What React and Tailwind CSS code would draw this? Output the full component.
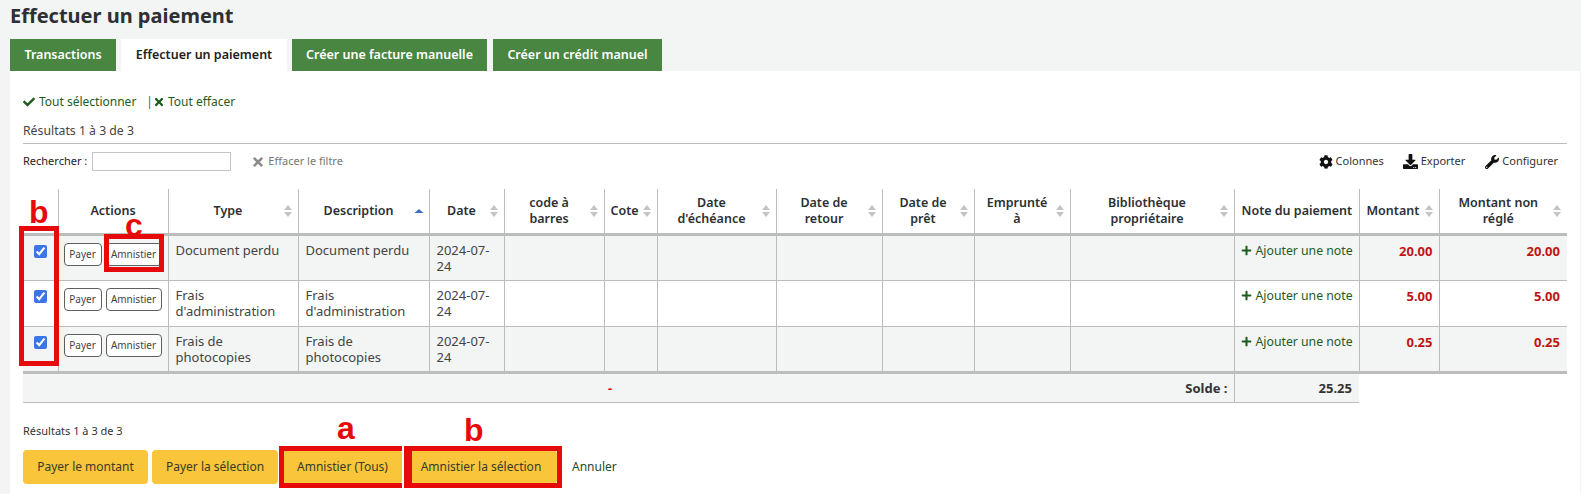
import { FaCheck, FaTimes, FaPlus, FaCog, FaDownload, FaWrench } from "react-icons/fa";

const columns = [
  { label: "", width: 35 },
  { label: "Actions", width: 110 },
  { label: "Type", width: 130, sort: true },
  { label: "Description", width: 131, sort: "asc" },
  { label: "Date", width: 75, sort: true },
  { label: "code à barres", width: 100, sort: true },
  { label: "Cote", width: 53, sort: true, pad: "pl-[6px] pr-[4px]" },
  { label: "Date d'échéance", width: 119, sort: true },
  { label: "Date de retour", width: 106, sort: true },
  { label: "Date de prêt", width: 92, sort: true },
  { label: "Emprunté à", width: 96, sort: true },
  { label: "Bibliothèque propriétaire", width: 164, sort: true },
  { label: "Note du paiement", width: 125, pad: "pl-[7px] pr-[3px]" },
  { label: "Montant", width: 80, sort: true, pad: "pl-[7px] pr-[3px]" },
  { label: "Montant non réglé", width: 128, sort: true },
];

const rows = [
  { type: "Document perdu", amount: "20.00", bg: "bg-[#f3f4f4]" },
  { type: "Frais d'administration", amount: "5.00", bg: "bg-white" },
  { type: "Frais de photocopies", amount: "0.25", bg: "bg-[#f3f4f4]" },
];

function SortIcon({ sort }) {
  return (
    <svg viewBox="0 0 10 14" className="absolute right-[5px] top-1/2 h-[14px] w-[10px] -translate-y-1/2">
      {sort === "asc" ? (
        <path d="M5 5 9.500 9H.5z" fill="#3a6fc4" />
      ) : (
        <>
          <path d="M5 1 9 6H1z" fill="#c4c4c4" />
          <path d="M5 13 1 8h8z" fill="#c4c4c4" />
        </>
      )}
    </svg>
  );
}

function RedBox({ className }) {
  return <div className={`absolute border-[5px] border-[#e60a0a] ${className}`} />;
}

function RedLetter({ className, children }) {
  return (
    <span className={`absolute font-['Liberation_Sans',sans-serif] font-bold leading-none text-[#e60a0a] ${className}`}>
      {children}
    </span>
  );
}

function SmallButton({ className, children }) {
  return (
    <button className={`flex h-[23px] items-center justify-center rounded-[4px] border border-[#5f5f5f] bg-white text-[10px] text-[#444] ${className}`}>
      {children}
    </button>
  );
}

function YellowButton({ className, children }) {
  return (
    <button className={`flex h-[34px] items-center justify-center rounded-[4px] bg-[#f9c53a] text-[12px] text-[#3a3a2a] ${className}`}>
      {children}
    </button>
  );
}

function Tab({ active, className, children }) {
  return (
    <div
      className={`flex h-[32px] items-center justify-center text-[12.5px] font-semibold ${
        active ? "bg-white text-[#222]" : "bg-[#488642] text-white"
      } ${className}`}
    >
      {children}
    </div>
  );
}

export default function App() {
  return (
    <div className="relative h-[494px] overflow-hidden bg-[#f3f4f4] font-['Noto_Sans',sans-serif] text-[#333]">
      <h1 className="h-[39px] pl-[10px] pt-[2px] text-[20px] font-bold leading-[28px] text-[#2c3033]">Effectuer un paiement</h1>

      <div className="flex pl-[10px]">
        <Tab className="w-[106px]">Transactions</Tab>
        <Tab active className="ml-[5px] w-[166px]">Effectuer un paiement</Tab>
        <Tab className="ml-[5px] w-[195px]">Créer une facture manuelle</Tab>
        <Tab className="ml-[6px] w-[169px]">Créer un crédit manuel</Tab>
      </div>

      <div className="ml-[10px] mr-px h-[423px] bg-white pl-[13px] pr-[13px]">
        <div className="flex h-[54px] items-center pt-[7px] text-[12px] text-[#1d5c1d]">
          <FaCheck className="mr-[4px] text-[12px] text-[#1d5c1d]" />
          <span>Tout sélectionner</span>
          <span className="ml-[10px] text-[#555]">|</span>
          <FaTimes className="mr-[3px] text-[12px]" />
          <span>Tout effacer</span>
        </div>
        <div className="flex h-[18px] items-start text-[12.25px] leading-[12px] text-[#444]">Résultats 1 à 3 de 3</div>

        <div className="h-[46px] border-t border-[#bcbcbc] pt-[8px]">
          <div className="flex h-[19px] items-center text-[11px] text-[#222]">
            <span>Rechercher :</span>
            <input className="ml-[5px] h-[19px] w-[139px] border border-[#c4c4c4] bg-white" />
            <FaTimes className="ml-[20px] text-[14px] text-[#8a8a8a]" />
            <span className="ml-[3px] text-[#777]">Effacer le filtre</span>
            <div className="ml-auto flex items-center text-[11px] text-[#333]">
              <FaCog className="mr-[3px] text-[14px] text-[#111]" />
              <span>Colonnes</span>
              <FaDownload className="ml-[19px] mr-[3px] text-[15px] text-[#111]" />
              <span>Exporter</span>
              <FaWrench className="ml-[20px] mr-[3px] text-[14px] text-[#111]" />
              <span className="mr-[9px]">Configurer</span>
            </div>
          </div>
        </div>

        <table className="w-[1544px] table-fixed border-collapse text-[13px] leading-[16px]">
          <colgroup>
            {columns.map((col, i) => (
              <col key={i} style={{ width: col.width }} />
            ))}
          </colgroup>
          <thead>
            <tr className="h-[45px] border-b-[3px] border-[#bcbcbc]">
              {columns.map((col, i) => (
                <th
                  key={i}
                  className={`relative border-r border-[#bcbcbc] text-[12.5px] font-semibold leading-[16px] text-[#2c3033] ${
                    i === columns.length - 1 ? "border-r-0" : ""
                  } ${col.pad ? `whitespace-nowrap text-left ${col.pad}` : "text-center"} ${
                    !col.pad && col.sort ? "pl-[9px] pr-[19px]" : ""
                  }`}
                >
                  {col.label}
                  {col.sort && <SortIcon sort={col.sort} />}
                </th>
              ))}
            </tr>
          </thead>
          <tbody>
            {rows.map((row) => (
              <tr key={row.amount} className={`h-[46px] border-b border-[#bcbcbc] ${row.bg}`}>
                <td className="border-r border-[#bcbcbc] pl-[11px] pt-[5px] align-top">
                  <input type="checkbox" defaultChecked className="mt-[4px] block h-[13px] w-[13px] accent-[#3b75e8]" />
                </td>
                <td className="border-r border-[#bcbcbc] pl-[5px] pt-[7px] align-top">
                  <div className="flex gap-[4px]">
                    <SmallButton className="w-[38px]">Payer</SmallButton>
                    <SmallButton className="w-[56px]">Amnistier</SmallButton>
                  </div>
                </td>
                <td className="border-r border-[#bcbcbc] px-[7px] pt-[6px] align-top text-[#444]">{row.type}</td>
                <td className="border-r border-[#bcbcbc] px-[7px] pt-[6px] align-top text-[#444]">{row.type}</td>
                <td className="border-r border-[#bcbcbc] px-[7px] pt-[6px] align-top text-[#444]">2024-07-24</td>
                {[0, 1, 2, 3, 4, 5, 6].map((n) => (
                  <td key={n} className="border-r border-[#bcbcbc]" />
                ))}
                <td className="whitespace-nowrap border-r border-[#bcbcbc] pl-[6px] pt-[7px] align-top text-[12.25px] text-[#1d5c1d]">
                  <FaPlus className="mr-[4px] inline align-[-1px] text-[11px]" />
                  Ajouter une note
                </td>
                <td className="border-r border-[#bcbcbc] pr-[6px] pt-[7px] text-right align-top font-bold text-[#c01414]">{row.amount}</td>
                <td className="pr-[7px] pt-[7px] text-right align-top font-bold text-[#c01414]">{row.amount}</td>
              </tr>
            ))}
          </tbody>
          <tfoot>
            <tr className="h-[30px] border-t-[3px] border-[#bcbcbc]">
              <td colSpan={12} className="relative border-b border-[#bcbcbc] bg-[#f3f4f4] pr-[6px] text-right font-bold text-[#333]">
                <span className="absolute left-[585px] top-[6px] text-[13px] font-bold text-[#e60a0a]">-</span>
                Solde :
              </td>
              <td className="border-b border-l border-[#bcbcbc] bg-[#f3f4f4] pr-[7px] text-right font-bold text-[#333]">25.25</td>
              <td colSpan={2} className="bg-white" />
            </tr>
          </tfoot>
        </table>

        <div className="flex h-[47px] items-end pb-[13px] text-[11px] leading-[12px] text-[#333]">Résultats 1 à 3 de 3</div>

        <div className="flex items-center">
          <YellowButton className="w-[125px]">Payer le montant</YellowButton>
          <YellowButton className="ml-[4px] w-[126px]">Payer la sélection</YellowButton>
          <YellowButton className="ml-[5px] w-[119px]">Amnistier (Tous)</YellowButton>
          <YellowButton className="ml-[3px] w-[152px]">Amnistier la sélection</YellowButton>
          <span className="ml-[15px] text-[12px] text-[#1d4d2a]">Annuler</span>
        </div>
      </div>

      {/* annotations drawn over the screenshot */}
      <RedBox className="left-[19px] top-[226px] h-[140px] w-[40px]" />
      <RedBox className="left-[104px] top-[234px] h-[38px] w-[60px]" />
      <RedBox className="left-[279px] top-[446px] h-[42px] w-[123px] border-r-0" />
      <RedBox className="left-[404px] top-[446px] h-[42px] w-[158px] border-l-[8px]" />
      <RedLetter className="left-[29px] top-[196px] text-[32px]">b</RedLetter>
      <RedLetter className="left-[125px] top-[209px] text-[32px]">c</RedLetter>
      <RedLetter className="left-[337px] top-[412px] text-[32px]">a</RedLetter>
      <RedLetter className="left-[464px] top-[414px] text-[32px]">b</RedLetter>
    </div>
  );
}
